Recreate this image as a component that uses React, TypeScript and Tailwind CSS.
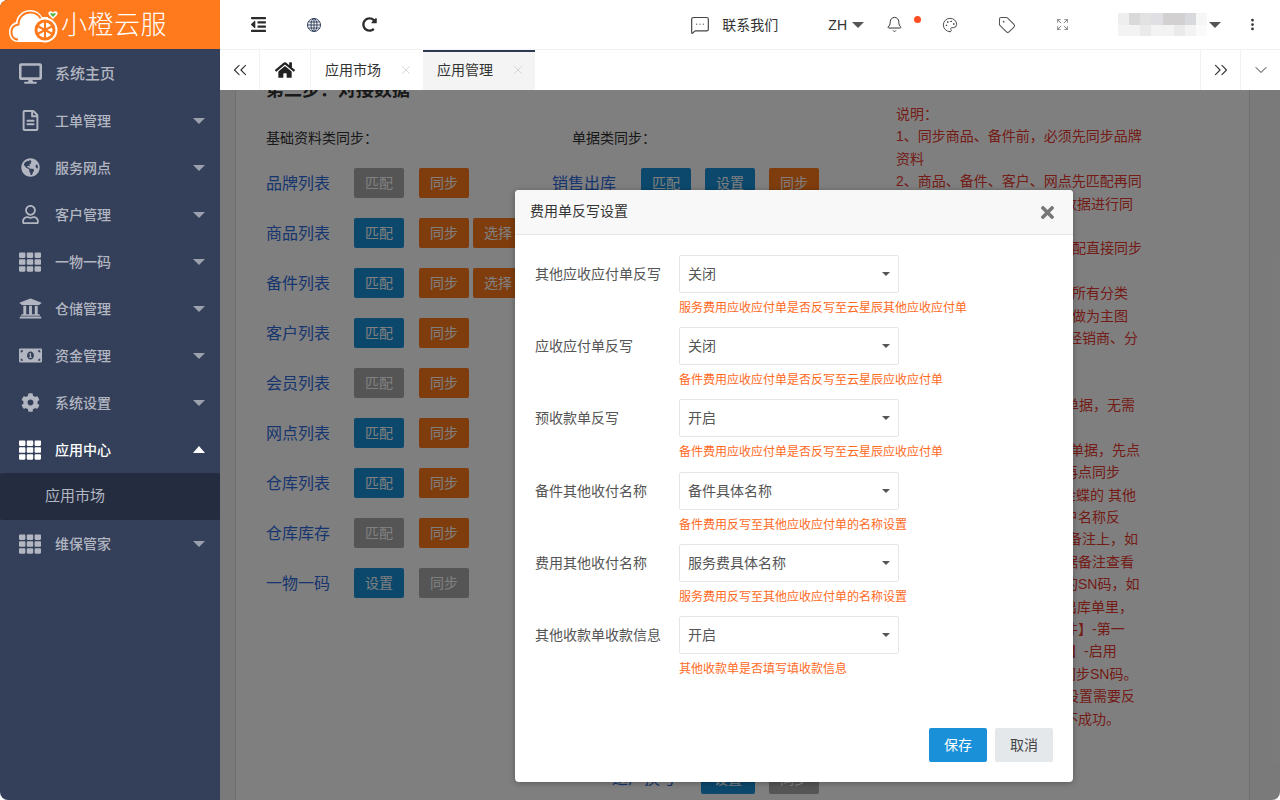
import { ReactNode } from 'react';
import { FaCog, FaDesktop, FaGlobeAmericas, FaHome, FaMoneyBillAlt, FaOutdent, FaRedoAlt, FaRegFileAlt, FaRegUser, FaTh, FaTimes, FaUniversity } from 'react-icons/fa';
import { Bell, ChevronDown, ChevronsLeft, ChevronsRight, EllipsisVertical, Expand, MessageSquareMore, Palette, Tag, X } from 'lucide-react';

type BtnColor = 'gray' | 'blue' | 'orange';

const btnColors: Record<BtnColor, string> = {
  gray: 'bg-[#aaaaaa]',
  blue: 'bg-[#1890d8]',
  orange: 'bg-[#ff7a1c]',
};

const menu: { label: string; icon: ReactNode }[] = [
  { label: '工单管理', icon: <FaRegFileAlt size={21} /> },
  { label: '服务网点', icon: <FaGlobeAmericas size={19} /> },
  { label: '客户管理', icon: <FaRegUser size={19} /> },
  { label: '一物一码', icon: <FaTh size={22} /> },
  { label: '仓储管理', icon: <FaUniversity size={23} /> },
  { label: '资金管理', icon: <FaMoneyBillAlt size={23} /> },
  { label: '系统设置', icon: <FaCog size={19} /> },
];

const leftRows: { label: string; buttons: [string, BtnColor][] }[] = [
  { label: '品牌列表', buttons: [['匹配', 'gray'], ['同步', 'orange']] },
  { label: '商品列表', buttons: [['匹配', 'blue'], ['同步', 'orange'], ['选择', 'orange']] },
  { label: '备件列表', buttons: [['匹配', 'blue'], ['同步', 'orange'], ['选择', 'orange']] },
  { label: '客户列表', buttons: [['匹配', 'blue'], ['同步', 'orange']] },
  { label: '会员列表', buttons: [['匹配', 'gray'], ['同步', 'orange']] },
  { label: '网点列表', buttons: [['匹配', 'blue'], ['同步', 'orange']] },
  { label: '仓库列表', buttons: [['匹配', 'blue'], ['同步', 'orange']] },
  { label: '仓库库存', buttons: [['匹配', 'gray'], ['同步', 'orange']] },
  { label: '一物一码', buttons: [['设置', 'blue'], ['同步', 'gray']] },
];

// start offset of what is visible of each line, the rest sits behind the dialog
const notes: [number, string][] = [
  [0, '说明\uFF1A'],
  [0, '1、同步商品、备件前\uFF0C必须先同步品牌'],
  [0, '资料'],
  [0, '2、商品、备件、客户、网点先匹配再同'],
  [167, '数据进行同'],
  [0, ''],
  [176, '配直接同步'],
  [0, ''],
  [176, '所有分类'],
  [176, '做为主图'],
  [172, '经销商、分'],
  [0, ''],
  [0, ''],
  [169, '单据\uFF0C无需'],
  [0, ''],
  [174, '单据\uFF0C先点'],
  [168, '再点同步'],
  [166, '金蝶的 其他'],
  [168, '户名称反'],
  [172, '备注上\uFF0C如'],
  [168, '据备注查看'],
  [168, '的SN码\uFF0C如'],
  [167, '出库单里\uFF0C'],
  [168, '件】-第一'],
  [174, '】-启用'],
  [166, '同步SN码。'],
  [169, '设置需要反'],
  [168, '不成功。'],
];

const fields = [
  { label: '其他应收应付单反写', value: '关闭', hint: '服务费用应收应付单是否反写至云星辰其他应收应付单' },
  { label: '应收应付单反写', value: '关闭', hint: '备件费用应收应付单是否反写至云星辰应收应付单' },
  { label: '预收款单反写', value: '开启', hint: '备件费用应收应付单是否反写至云星辰应收应付单' },
  { label: '备件其他收付名称', value: '备件具体名称', hint: '备件费用反写至其他应收应付单的名称设置' },
  { label: '费用其他收付名称', value: '服务费具体名称', hint: '服务费用反写至其他应收应付单的名称设置' },
  { label: '其他收款单收款信息', value: '开启', hint: '其他收款单是否填写填收款信息' },
];

const mosaic = [
  'bg-[#eeeeee]', 'bg-[#d9d9d9]', 'bg-[#e2e2e2]', 'bg-[#e0e0e4]', 'bg-[#d2d0d0]', 'bg-[#d2d0d0]', 'bg-[#d8d9dc]', 'bg-[#f6f6f6]',
  'bg-[#f3f3f3]', 'bg-[#f3f3f3]', 'bg-[#eaeaea]', 'bg-[#f3f3f3]', 'bg-[#f3f3f3]', 'bg-[#eaeaea]', 'bg-[#f3f3f3]', 'bg-[#fafafa]',
];

function Caret({ className }: { className: string }) {
  return <span className={`h-0 w-0 border-x-[6px] border-x-transparent ${className}`} />;
}

function Logo() {
  return (
    <svg width="52" height="36" viewBox="0 0 52 36" className="shrink-0">
      <path
        d="M10 35 C3 35 1 29 1 25 C1 19 5 16 8 15 C9 8 15 3 22 3 C28 3 32 6 34 10 L40 10 L40 35 Z"
        fill="#fff"
      />
      <path
        d="M10 32.500 C5 32.500 3.500 28 3.500 25 C3.500 20 7 18 10.500 17.500 C10.500 10 16 5.500 22 5.500 C27 5.500 31 8 33 12"
        fill="none"
        stroke="#ff7a1c"
        strokeWidth="2"
      />
      <circle cx="37" cy="23" r="12.5" fill="#fff" />
      <circle cx="37" cy="23" r="10.5" fill="#ff7a1c" />
      <circle cx="37" cy="23" r="7.5" fill="#fff" />
      <g stroke="#ff7a1c" strokeWidth="2">
        <line x1="37" y1="15" x2="37" y2="31" />
        <line x1="29.5" y1="19" x2="44.5" y2="27" />
        <line x1="29.5" y1="27" x2="44.5" y2="19" />
      </g>
      <path d="M41 8 C39 5 43 3 45 5.500 C47 3 51 5 49 8 L45 12 Z" fill="#fff" />
      <path d="M42.500 7.500 C42 6 44 5.500 45 7 C46 5.500 48 6 47.500 7.500 L45 10 Z" fill="#55b948" />
    </svg>
  );
}

function GlobeIcon() {
  return (
    <svg width="16" height="16" viewBox="0 0 16 16" fill="none" stroke="#33415f" strokeWidth="1">
      <circle cx="8" cy="8" r="6.500" />
      <ellipse cx="8" cy="8" rx="3" ry="6.500" />
      <line x1="8" y1="1.500" x2="8" y2="14.500" />
      <line x1="1.500" y1="8" x2="14.500" y2="8" />
      <line x1="2.500" y1="5" x2="13.500" y2="5" />
      <line x1="2.500" y1="11" x2="13.500" y2="11" />
    </svg>
  );
}

function MenuItem({ label, icon, active }: { label: string; icon: ReactNode; active?: boolean }) {
  return (
    <div className={`flex h-[47px] items-center ${active ? 'text-white' : 'text-[#b2b6c1]'}`}>
      <div className="flex w-[55px] shrink-0 justify-center pl-[5px]">{icon}</div>
      <span className="flex-1 text-sm font-medium">{label}</span>
      {active ? (
        <Caret className="mr-[15px] border-b-[7px] border-b-white" />
      ) : (
        <Caret className="mr-[15px] border-t-[6px] border-t-[#9ca1ae]" />
      )}
    </div>
  );
}

function Sidebar() {
  return (
    <aside className="flex w-[220px] shrink-0 flex-col bg-[#343f59]">
      <div className="flex h-[49px] items-center bg-[#ff7a1c] pl-[8px] text-white">
        <Logo />
        <span className="ml-[1px] text-[26px] leading-none font-light tracking-[0.5px]">小橙云服</span>
      </div>
      <div className="flex h-[48px] items-center text-[#b2b6c1]">
        <div className="flex w-[55px] shrink-0 justify-center pl-[5px]">
          <FaDesktop size={23} />
        </div>
        <span className="pt-[2px] text-[15px] font-medium">系统主页</span>
      </div>
      {menu.map((m) => (
        <MenuItem key={m.label} label={m.label} icon={m.icon} />
      ))}
      <MenuItem label="应用中心" icon={<FaTh size={22} />} active />
      <div className="flex h-[47px] items-center rounded-[2px] bg-[#242d3f] pl-[45px] text-[15px] text-[#b2b6c1]">
        应用市场
      </div>
      <MenuItem label="维保管家" icon={<FaTh size={22} />} />
    </aside>
  );
}

function TopBar() {
  return (
    <header className="flex h-[50px] shrink-0 items-center border-b border-[#f2f2f2] bg-white pl-[10px] text-[#333]">
      <div className="flex w-[56px] justify-center">
        <FaOutdent size={17} className="text-[#2b2b2b]" />
      </div>
      <div className="flex w-[56px] justify-center">
        <GlobeIcon />
      </div>
      <div className="flex w-[54px] justify-center">
        <FaRedoAlt size={15} className="text-[#2b2b2b]" />
      </div>
      <div className="ml-auto flex items-center">
        <MessageSquareMore size={20} strokeWidth={1.4} className="text-[#444]" />
        <span className="ml-[12px] w-[56px] text-sm">联系我们</span>
        <span className="ml-[50px] text-sm">ZH</span>
        <Caret className="ml-[5px] border-t-[6px] border-t-[#555]" />
        <Bell size={17} strokeWidth={1.4} className="ml-[22px] text-[#333]" />
        <span className="mb-[10px] ml-[11px] h-[7px] w-[7px] rounded-full bg-[#ff4d24]" />
        <Palette size={16} strokeWidth={1.4} className="ml-[21px] text-[#444]" />
        <Tag size={18} strokeWidth={1.4} className="ml-[40px] text-[#555]" />
        <Expand size={13} strokeWidth={1.4} className="ml-[40px] text-[#666]" />
        <div className="ml-[49px] grid h-[23px] w-[89px] grid-cols-8 grid-rows-2">
          {mosaic.map((c, i) => (
            <span key={i} className={c} />
          ))}
        </div>
        <Caret className="ml-[2px] border-t-[6px] border-t-[#555]" />
        <EllipsisVertical size={15} strokeWidth={2.4} className="mr-[20px] ml-[24px] text-[#333]" />
      </div>
    </header>
  );
}

function TabBar() {
  return (
    <div className="flex h-[40px] shrink-0 bg-white text-[#333]">
      <div className="flex w-[40px] items-center justify-center border-r border-[#f2f2f2]">
        <ChevronsLeft size={22} strokeWidth={1.2} />
      </div>
      <div className="flex w-[51px] items-center justify-center border-r border-[#f2f2f2]">
        <FaHome size={20} className="text-[#222]" />
      </div>
      <div className="flex w-[112px] items-center pr-[10px] pl-[14px] text-[14px]">
        <span className="flex-1">应用市场</span>
        <X size={14} strokeWidth={1.1} className="text-[#c4c4c4]" />
      </div>
      <div className="flex w-[112px] items-center border-t-2 border-[#2f3a55] bg-[#f4f4f4] pr-[10px] pb-[2px] pl-[14px] text-[14px]">
        <span className="flex-1">应用管理</span>
        <X size={14} strokeWidth={1.1} className="text-[#c4c4c4]" />
      </div>
      <div className="ml-auto flex w-[40px] items-center justify-center border-l border-[#f2f2f2]">
        <ChevronsRight size={22} strokeWidth={1.2} />
      </div>
      <div className="flex w-[40px] items-center justify-center border-l border-[#f2f2f2]">
        <ChevronDown size={20} strokeWidth={1.2} />
      </div>
    </div>
  );
}

function SyncButton({ text, color }: { text: string; color: BtnColor }) {
  return (
    <button className={`flex h-[30px] w-[50px] items-center justify-center rounded-[2px] text-[14px] text-white ${btnColors[color]}`}>
      {text}
    </button>
  );
}

function PageBehind() {
  return (
    <div className="mr-[30px] ml-[15px] flex h-[760px] border-x border-[#dedede] bg-white pl-[30px]">
      <div className="-mt-[12px] w-[630px] shrink-0">
        <h2 className="text-[18px] leading-[24px] font-bold text-[#333]">{'第二步\uFF1A对接数据'}</h2>
        <div className="mt-[25px] flex">
          <div className="w-[287px] shrink-0">
            <p className="text-sm leading-[22px] text-[#333]">{'基础资料类同步\uFF1A'}</p>
            <div className="mt-[9px]">
              {leftRows.map((r) => (
                <div key={r.label} className="flex h-[50px] items-center">
                  <span className="w-[88px] pt-[2px] text-base text-[#2f6bdc]">{r.label}</span>
                  {r.buttons.map(([t, c], i) => (
                    <div key={t} className={i === 1 ? 'ml-[15px]' : i === 2 ? 'ml-[4px]' : ''}>
                      <SyncButton text={t} color={c} />
                    </div>
                  ))}
                </div>
              ))}
            </div>
          </div>
          <div className="flex-1">
            <p className="pl-[19px] text-sm leading-[22px] text-[#333]">{'单据类同步\uFF1A'}</p>
            <div className="mt-[9px] flex h-[50px] items-center gap-[14px]">
              <span className="-ml-[1px] w-[75px] pt-[2px] text-base text-[#2f6bdc]">销售出库</span>
              <SyncButton text="匹配" color="blue" />
              <SyncButton text="设置" color="blue" />
              <SyncButton text="同步" color="orange" />
            </div>
            <div className="mt-[546px] flex h-[50px] items-center">
              <span className="ml-[59px] w-[89px] text-base text-[#2f6bdc]">返厂换号</span>
              <button className="flex h-[30px] w-[54px] items-center justify-center rounded-[2px] bg-[#1890d8] text-[14px] text-white">
                设置
              </button>
              <div className="ml-[14px]">
                <SyncButton text="同步" color="gray" />
              </div>
            </div>
          </div>
        </div>
      </div>
      <div className="pt-[13px] text-sm leading-[22.4px] whitespace-nowrap text-[#e8382e]">
        {notes.map(([offset, line], i) => (
          <div key={i} className="h-[22.4px]" style={{ paddingLeft: offset }}>
            {line}
          </div>
        ))}
      </div>
    </div>
  );
}

function Dialog() {
  return (
    <div className="absolute top-[100px] left-[295px] flex h-[592px] w-[558px] flex-col rounded-[4px] bg-white shadow-[0_1px_6px_rgba(0,0,0,0.3)]">
      <div className="flex h-[45px] shrink-0 items-center justify-between rounded-t-[4px] border-b border-[#e6e6e6] bg-[#f8f8f8] pr-[16px] pl-[15px]">
        <span className="pb-[2px] text-sm text-[#333]">费用单反写设置</span>
        <FaTimes size={19} className="text-[#777]" />
      </div>
      <div className="flex-1 pt-[20px] pl-[20px]">
        {fields.map((f) => (
          <div key={f.label} className="flex h-[72.2px]">
            <label className="flex h-[38px] w-[144px] shrink-0 items-center text-sm text-[#555]">{f.label}</label>
            <div>
              <div className="flex h-[38px] w-[220px] items-center justify-between rounded-[2px] border border-[#e6e6e6] pr-[8px] pl-[8px] text-sm text-[#555]">
                {f.value}
                <span className="h-0 w-0 border-x-[4px] border-t-[4px] border-x-transparent border-t-[#555]" />
              </div>
              <p className="mt-[6px] text-xs leading-[18px] text-[#ff6a1e]">{f.hint}</p>
            </div>
          </div>
        ))}
      </div>
      <div className="flex justify-end gap-[8px] pr-[20px] pb-[20px]">
        <button className="flex h-[34px] w-[58px] items-center justify-center rounded-[2px] bg-[#1a90d9] text-sm text-white">
          保存
        </button>
        <button className="flex h-[34px] w-[58px] items-center justify-center rounded-[2px] bg-[#e4e8eb] text-sm text-[#444]">
          取消
        </button>
      </div>
    </div>
  );
}

export default function App() {
  return (
    <div className="flex h-[800px] w-[1280px] overflow-hidden rounded-[8px] font-['Liberation_Sans','Noto_Sans_CJK_SC',sans-serif]">
      <Sidebar />
      <div className="flex min-w-0 flex-1 flex-col">
        <TopBar />
        <TabBar />
        <main className="relative flex-1 overflow-hidden bg-[#f5f5f5]">
          <PageBehind />
          <div className="absolute inset-0 bg-black/50" />
          <Dialog />
        </main>
      </div>
    </div>
  );
}
